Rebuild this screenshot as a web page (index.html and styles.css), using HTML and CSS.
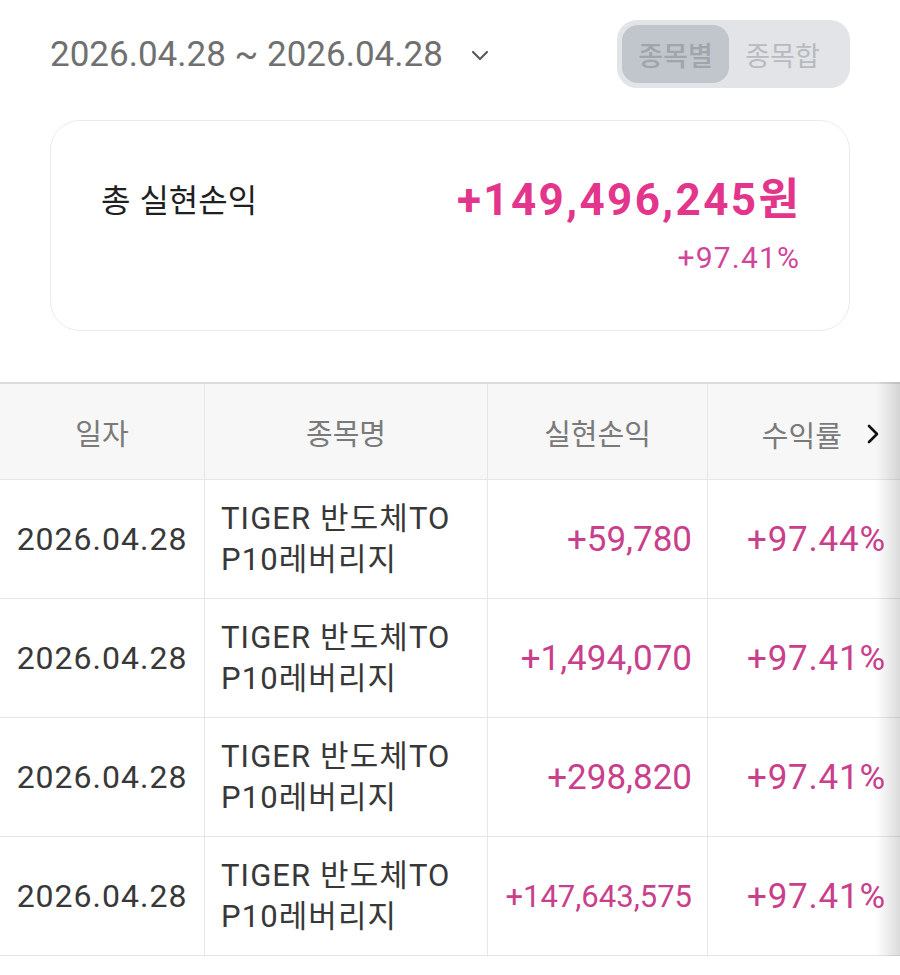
FILE: index.html
```html
<!DOCTYPE html>
<html lang="ko">
<head>
    <meta charset="UTF-8">
    <meta name="viewport" content="width=device-width, initial-scale=1.0">
    <title>실현손익</title>
    <link rel="stylesheet" href="styles.css">
</head>
<body>
    <div class="page">
        <div class="topbar">
            <div class="period">
                <span>2026.04.28 ~ 2026.04.28</span>
                <svg class="chevron-down" width="18" height="12" viewBox="0 0 18 12">
                    <path d="M2 3l7 7 7-7" fill="none" stroke="#5a5a5a" stroke-width="2.2" stroke-linecap="round" stroke-linejoin="round"/>
                </svg>
            </div>
            <div class="toggle">
                <button class="toggle-btn active">종목별</button>
                <button class="toggle-btn">종목합</button>
            </div>
        </div>

        <div class="summary">
            <div class="summary-label">총 실현손익</div>
            <div class="summary-values">
                <div class="summary-amount">+149,496,245원</div>
                <div class="summary-rate">+97.41%</div>
            </div>
        </div>

        <div class="table-wrap">
            <table class="pnl">
                <thead>
                    <tr>
                        <th class="col-date">일자</th>
                        <th class="col-name">종목명</th>
                        <th class="col-amount">실현손익</th>
                        <th class="col-rate">
                            <span>수익률</span>
                            <svg class="chevron-right" width="14" height="22" viewBox="0 0 14 22">
                                <path d="M3 3l8 8-8 8" fill="none" stroke="#111" stroke-width="2.6" stroke-linecap="round" stroke-linejoin="round"/>
                            </svg>
                        </th>
                    </tr>
                </thead>
                <tbody>
                    <tr>
                        <td class="date">2026.04.28</td>
                        <td class="name">TIGER 반도체TO<br>P10레버리지</td>
                        <td class="amount">+59,780</td>
                        <td class="rate">+97.44%</td>
                    </tr>
                    <tr>
                        <td class="date">2026.04.28</td>
                        <td class="name">TIGER 반도체TO<br>P10레버리지</td>
                        <td class="amount">+1,494,070</td>
                        <td class="rate">+97.41%</td>
                    </tr>
                    <tr>
                        <td class="date">2026.04.28</td>
                        <td class="name">TIGER 반도체TO<br>P10레버리지</td>
                        <td class="amount">+298,820</td>
                        <td class="rate">+97.41%</td>
                    </tr>
                    <tr>
                        <td class="date">2026.04.28</td>
                        <td class="name">TIGER 반도체TO<br>P10레버리지</td>
                        <td class="amount small">+147,643,575</td>
                        <td class="rate">+97.41%</td>
                    </tr>
                </tbody>
            </table>
            <div class="scroll-shadow"></div>
        </div>
    </div>
</body>
</html>
```

FILE: styles.css
```css
body {
    margin: 0;
    background: #fff;
    font-family: Roboto, "Noto Sans CJK KR", sans-serif;
    color: #222;
}
.page {
    width: 900px;
    overflow: hidden;
}
.topbar {
    display: flex;
    justify-content: space-between;
    align-items: center;
    padding: 20px 50px 0 50px;
    height: 68px;
}
.period {
    display: flex;
    align-items: center;
    gap: 28px;
    font-size: 35px;
    color: #707070;
}
.chevron-down {
    margin-top: 2px;
}
.toggle {
    display: flex;
    background: #e3e4e7;
    border-radius: 20px;
    padding: 5px;
    box-sizing: border-box;
    width: 233px;
}
.toggle-btn {
    border: none;
    background: transparent;
    font-family: "Noto Sans CJK KR", sans-serif;
    font-size: 27px;
    color: #b7bac0;
    height: 58px;
    width: 107px;
    border-radius: 16px;
    padding: 0;
}
.toggle-btn.active {
    background: #c1c5cc;
    color: #a0a4ab;
    font-weight: 500;
}
.summary {
    margin: 32px 50px 0 50px;
    height: 211px;
    box-sizing: border-box;
    border: 1.5px solid #ebebeb;
    border-radius: 30px;
    display: flex;
    justify-content: space-between;
    align-items: flex-start;
    padding: 50px 50px 0 50px;
}
.summary-label {
    font-family: "Noto Sans CJK KR", sans-serif;
    font-size: 32px;
    color: #1f1f1f;
    margin-top: 4px;
}
.summary-values {
    text-align: right;
}
.summary-amount {
    font-size: 44px;
    font-weight: 700;
    letter-spacing: 2.4px;
    margin-right: -2.4px;
    color: #e2358b;
    line-height: 58px;
}
.summary-rate {
    font-size: 30px;
    letter-spacing: 1.2px;
    margin-right: -1.2px;
    color: #d2459a;
    margin-top: 11px;
}
.table-wrap {
    position: relative;
    margin-top: 51px;
    overflow: hidden;
}
.pnl {
    border-collapse: collapse;
    width: 900px;
    table-layout: fixed;
}
.pnl thead tr {
    background: #f7f7f7;
    border-top: 2px solid #dcdcdc;
}
.pnl th {
    height: 95px;
    font-family: "Noto Sans CJK KR", sans-serif;
    font-weight: 400;
    font-size: 29px;
    color: #7a7a7a;
    border-right: 1px solid #e6e6e6;
    border-bottom: 1px solid #e6e6e6;
    padding: 0;
}
.col-date { width: 204px; }
.col-name { width: 282px; }
.col-amount { width: 219px; }
.pnl th.col-rate {
    text-align: right;
    padding-right: 20px;
    border-right: none;
}
.col-rate span {
    vertical-align: middle;
}
.chevron-right {
    vertical-align: middle;
    margin-left: 16px;
}
.pnl td {
    height: 118px;
    padding: 0 15px;
    border-right: 1px solid #e6e6e6;
    border-bottom: 1px solid #e6e6e6;
    font-size: 35px;
}
.pnl td.date {
    text-align: center;
    color: #383838;
    padding: 0;
    font-size: 32px;
    letter-spacing: 1px;
}
.pnl td.name {
    padding-left: 16px;
    color: #383838;
    font-size: 31px;
    line-height: 41px;
    letter-spacing: 1.1px;
}
.pnl td.amount {
    text-align: right;
    color: #c93f8c;
}
.pnl td.amount.small {
    font-size: 31px;
}
.pnl td.rate {
    text-align: right;
    padding-right: 14px;
    border-right: none;
    letter-spacing: 0.8px;
    color: #c93f8c;
}
.scroll-shadow {
    position: absolute;
    top: 0;
    right: 0;
    bottom: 0;
    width: 24px;
    background: linear-gradient(to right, rgba(0, 0, 0, 0), rgba(0, 0, 0, 0.14));
}
```
